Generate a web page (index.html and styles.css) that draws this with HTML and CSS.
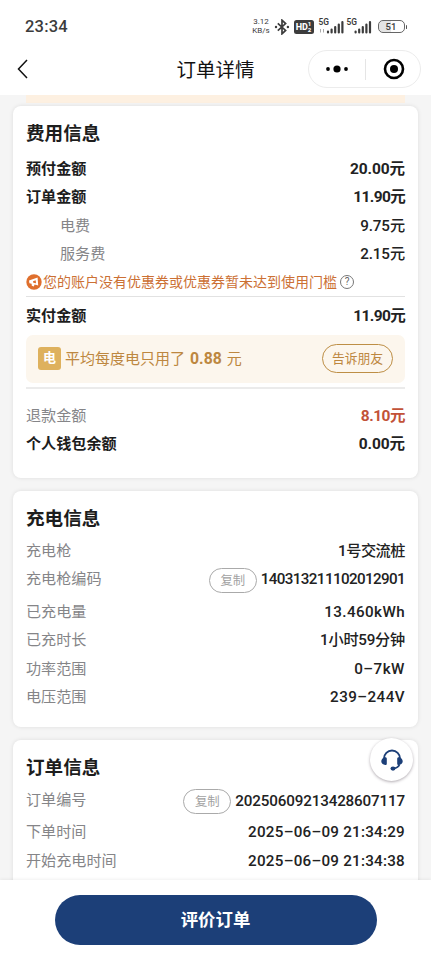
FILE: index.html
```html
<!DOCTYPE html>
<html lang="zh-CN">
<head>
<meta charset="utf-8">
<meta name="viewport" content="width=device-width, initial-scale=1">
<title>订单详情</title>
<link rel="stylesheet" href="styles.css">
</head>
<body>
<div class="app">
  <header class="statusbar">
    <span class="clock">23:34</span>
    <div class="status-icons">
      <div class="speed"><span>3.12</span><span>KB/s</span></div>
      <svg class="bluetooth" width="16" height="16" viewBox="0 0 16 16"><path d="M3.8 4.3 11.6 11.4 8 14.8V1.2l3.6 3.4L3.8 11.7" fill="none" stroke="#3c3c3c" stroke-width="1.7"/><circle cx="2" cy="8" r="1.2" fill="#3c3c3c"/><circle cx="13.9" cy="8" r="1.2" fill="#3c3c3c"/></svg>
      <div class="hd"><span>HD</span><span class="hd-num"><i>1</i><i>2</i></span></div>
      <div class="signal"><span>5G</span><svg width="26" height="14" viewBox="0 0 26 14"><path d="M1.5 9v3.5M4.5 9v3.5" stroke="#aaa" fill="none"/><path d="M9 11.5V12.5M12.6 9.5V12.5M16.2 7V12.5M19.8 4.5V12.5M23.4 2V12.5" stroke="#3c3c3c" stroke-width="2.2" stroke-linecap="round"/></svg></div>
      <div class="signal"><span>5G</span><svg width="26" height="14" viewBox="0 0 26 14"><path d="M8.6 11.5V12.5M12.2 9.5V12.5M15.8 7V12.5M19.4 4.5V12.5M23 2V12.5" stroke="#3c3c3c" stroke-width="2.2" stroke-linecap="round"/></svg></div>
      <div class="battery"><span>51</span></div><b class="battery-tip"></b>
    </div>
  </header>
  <nav class="navbar">
    <svg class="back" width="12" height="20" viewBox="0 0 12 20"><path d="M10 1 1.5 10 10 19" fill="none" stroke="#111" stroke-width="1.5"/></svg>
    <h1>订单详情</h1>
    <div class="capsule">
      <svg width="24" height="10" viewBox="0 0 24 10"><circle cx="3" cy="5" r="1.9"/><circle cx="12" cy="5" r="3.6"/><circle cx="21" cy="5" r="1.9"/></svg>
      <span class="divider"></span>
      <svg width="22" height="22" viewBox="0 0 22 22"><circle cx="11" cy="11" r="9" fill="none" stroke="#000" stroke-width="2.6"/><circle cx="11" cy="11" r="4"/></svg>
    </div>
  </nav>
  <main class="content">
    <div class="strip"></div>
    <section class="card fees">
      <h2>费用信息</h2>
      <div class="row strong"><span>预付金额</span><b>20.00元</b></div>
      <div class="row strong"><span>订单金额</span><b class="tight">11.90元</b></div>
      <div class="row sub"><span>电费</span><b>9.75元</b></div>
      <div class="row sub"><span>服务费</span><b>2.15元</b></div>
      <div class="notice">
        <svg width="16" height="16" viewBox="0 0 16 16"><circle cx="8" cy="8" r="7.7" fill="#df6f2d"/><path d="M3 6.6 11.6 3.4 12.2 11.6 8.6 10.6 7.8 12.6 5.8 11.8 5.6 9.8 3.4 9.2Z" fill="#fff"/><path d="M7 7.3 9.7 6.2 10 9.2 7.3 8.7Z" fill="#df6f2d"/></svg>
        <span>您的账户没有优惠券或优惠券暂未达到使用门槛</span>
        <i class="help">?</i>
      </div>
      <div class="row strong paid"><span>实付金额</span><b class="tight">11.90元</b></div>
      <div class="average">
        <span class="badge">电</span>
        <span class="average-text">平均每度电只用了 <b>0.88</b> 元</span>
        <button class="share">告诉朋友</button>
      </div>
      <hr>
      <div class="row refund"><span>退款金额</span><b>8.10元</b></div>
      <div class="row strong"><span>个人钱包余额</span><b>0.00元</b></div>
    </section>
    <section class="card charge">
      <h2>充电信息</h2>
      <div class="row"><span>充电枪</span><b class="pile">1号交流桩</b></div>
      <div class="row code"><span>充电枪编码</span><button class="copy">复制</button><b class="gun-code">140313211102012901</b></div>
      <div class="row"><span>已充电量</span><b class="energy">13.460kWh</b></div>
      <div class="row"><span>已充时长</span><b class="duration">1小时59分钟</b></div>
      <div class="row"><span>功率范围</span><b class="power">0–7kW</b></div>
      <div class="row"><span>电压范围</span><b class="voltage">239–244V</b></div>
    </section>
    <section class="card order">
      <h2>订单信息</h2>
      <div class="row code"><span>订单编号</span><button class="copy">复制</button><b class="order-code">20250609213428607117</b></div>
      <div class="row"><span>下单时间</span><b class="date">2025–06–09 21:34:29</b></div>
      <div class="row"><span>开始充电时间</span><b class="date">2025–06–09 21:34:38</b></div>
    </section>
  </main>
  <footer><button class="review">评价订单</button></footer>
  <div class="support"><svg width="24" height="24" viewBox="0 0 24 24"><path d="M4 11V10.5a8 8 0 0 1 16 0V11" fill="none" stroke="#1c3f78" stroke-width="1.9"/><path d="M5.2 9.2c1.2 0 1.6.6 1.6 1.6v4.6c0 1-.4 1.6-1.6 1.6C2.6 16.6 1.3 15 1.3 13.2S2.6 9.8 5.2 9.2ZM18.8 9.2c-1.2 0-1.6.6-1.6 1.6v4.6c0 1 .4 1.6 1.6 1.6 2.6-.4 3.9-2 3.9-3.8s-1.3-3.4-3.9-4Z" fill="#1c3f78"/><path d="M19.6 16.4c-.9 2.4-3 3.7-6 4.1" fill="none" stroke="#1c3f78" stroke-width="1.6"/><ellipse cx="13" cy="20.6" rx="2.5" ry="2.1" fill="#1c3f78"/></svg></div>
</div>
</body>
</html>
```
FILE: styles.css
```css
* { box-sizing: border-box; }
body { margin: 0; font-family: Roboto, "Noto Sans CJK SC", sans-serif; color: #1d1d1d; }
button { font-family: inherit; padding: 0; margin: 0; background: none; }
svg { flex: none; display: block; }
i { font-style: normal; }
h1, h2 { margin: 0; }
.app { position: relative; width: 431px; height: 960px; overflow: hidden; display: flex; flex-direction: column; background: #f5f5f5; }

.statusbar { flex: none; height: 50px; background: #fff; padding: 3px 24px 0 25px; display: flex; align-items: center; justify-content: space-between; color: #3c3c3c; }
.clock { font-size: 16.5px; font-weight: 500; letter-spacing: .2px; }
.status-icons { display: flex; align-items: center; }
.speed { display: flex; flex-direction: column; gap: 1px; font-size: 8px; line-height: 8px; width: 19px; text-align: center; font-weight: 400; }
.bluetooth { margin-left: 3px; }
.hd { display: flex; align-items: center; justify-content: center; width: 20px; height: 14px; margin: 0 5px 0 4px; border-radius: 2.5px; background: #3c3c3c; color: #fff; font-size: 9px; font-weight: 800; line-height: 14px; }
.hd-num { display: flex; flex-direction: column; font-size: 6px; line-height: 6px; }
.signal { position: relative; width: 26px; margin-right: 2px; }
.signal span { position: absolute; left: 0; top: -2px; font-size: 8.4px; line-height: 9px; font-weight: 600; }
.battery { width: 27px; height: 13px; margin-left: 3px; border: 1.5px solid #666; border-radius: 5px; background: linear-gradient(90deg, #e4e4e4 48%, #fff 48%); background-clip: padding-box; font-size: 9.5px; line-height: 11px; font-weight: 500; text-align: center; }
.battery-tip { width: 1.5px; height: 4px; margin-left: 1px; background: #555; border-radius: 1px; }

.navbar { flex: none; position: relative; height: 45px; background: #fff; display: flex; align-items: center; justify-content: center; padding-bottom: 4px; }
.navbar h1 { font-size: 19.5px; font-weight: 400; line-height: 26px; color: #111; }
.back { position: absolute; left: 17px; top: 9px; }
.capsule { position: absolute; left: 308px; top: 0; width: 113px; height: 38px; border: 1px solid #ececec; border-radius: 19px; display: flex; align-items: center; padding: 0 15px 0 16px; justify-content: space-between; }
.divider { width: 1px; height: 21px; background: #e5e5e5; margin-right: 2px; }

.content { flex: none; height: 785px; overflow: hidden; padding: 0 13px; }
.strip { height: 8px; margin: 0 13px 3px; background: #fdf0e1; }
.card { background: #fff; border-radius: 8px; padding: 13px 13px 0; margin-bottom: 13px; box-shadow: 0 0 4px rgba(0, 0, 0, .1); }
.fees { height: 372px; }
.charge { height: 236px; margin-bottom: 13px; }
.order { height: 170px; }
h2 { font-size: 18.6px; line-height: 30px; font-weight: 700; }
.fees h2 { margin-bottom: 5.5px; }
.charge h2 { margin-bottom: 2.5px; }
.order h2 { margin-bottom: 2px; }
.row { display: flex; align-items: center; height: 28.5px; font-size: 15.1px; line-height: 22px; color: #858588; white-space: nowrap; }
.row > b { margin-left: auto; color: #222; font-weight: 500; font-size: 15.2px; }
.row.strong span { color: #1d1d1d; font-weight: 700; }
.row.strong b, .row.refund b { font-weight: 700; font-size: 15.5px; letter-spacing: -.1px; }
.row.strong b.tight { letter-spacing: -.65px; }
.row.refund b { color: #c25238; letter-spacing: -.5px; }
.row.sub { padding-left: 34px; }
.row.sub b { letter-spacing: -.1px; }
.notice { display: flex; align-items: center; height: 28px; border-bottom: 1px solid #e2e2e2; color: #cc7034; font-size: 14px; line-height: 20px; white-space: nowrap; padding-bottom: 1px; }
.notice svg { margin-right: 1px; }
.help { flex: none; width: 14px; height: 14px; margin-left: 3px; border: 1px solid #777; border-radius: 50%; font-size: 10px; line-height: 12px; color: #666; text-align: center; }
.row.paid { height: 38px; }
.average { display: flex; align-items: center; height: 48px; padding: 0 12px; border-radius: 7px; background: #fcf6ed; color: #bd8740; white-space: nowrap; }
.badge { width: 23px; height: 23px; margin-right: 4px; border-radius: 3px; background: #deb15d; color: #fff; font-weight: 700; font-size: 13px; line-height: 22px; text-align: center; }
.average-text { font-size: 15px; line-height: 22px; word-spacing: 1.3px; }
.average-text b { font-size: 15.8px; }
.share { width: 71px; height: 29px; margin-left: auto; border: 1px solid #bd8e45; border-radius: 15px; color: #bd8740; font-size: 12.8px; line-height: 27px; }
hr { width: 100%; height: 2px; margin: 4px 0 13px; border: 0; background: #ebebeb; }
.row.code { height: 34px; align-items: flex-start; padding-top: 3px; }
.charge .row.code { height: 32.5px; }
.copy { width: 48px; height: 25px; margin: 1px 4px 0 auto; border: 1px solid #aaa; border-radius: 13px; color: #a2a2a2; font-size: 12.4px; line-height: 23px; }
.charge .copy { margin-top: 0; }
.row.code > b { margin-left: 0; }
.row b.pile { letter-spacing: -.5px; }
.row b.duration { letter-spacing: -.25px; }
.gun-code { letter-spacing: -.62px; }
.order .row.code { padding-top: 4px; height: 33px; }
.order .copy { margin-top: 0; }
.order-code { letter-spacing: -.15px; padding-top: 1px; }
.energy { letter-spacing: .4px; }
.power { letter-spacing: .5px; }
.voltage { letter-spacing: .45px; }
.date { letter-spacing: .25px; }

footer { flex: none; height: 80px; background: #fff; display: flex; justify-content: center; padding-top: 15px; box-shadow: 0 -1px 3px rgba(0, 0, 0, .06); position: relative; }
.review { width: 322px; height: 50px; border: 0; border-radius: 25px; background: #1c3f78; color: #fff; font-size: 17.4px; font-weight: 700; line-height: 51px; }
.support { position: absolute; left: 370px; top: 738px; width: 43px; height: 43px; border-radius: 50%; background: #fff; box-shadow: 0 1px 3px rgba(60, 45, 60, .4); display: flex; align-items: center; justify-content: center; }
```
